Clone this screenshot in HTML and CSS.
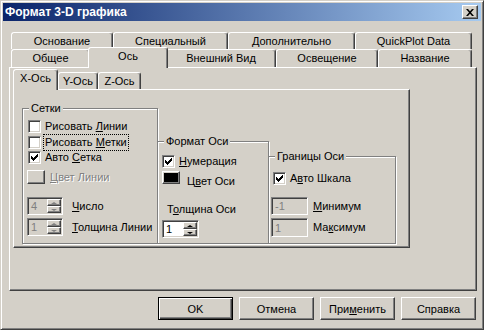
FILE: index.html
```html
<!DOCTYPE html>
<html lang="ru">
<head>
  <meta charset="UTF-8">
  <title>Формат 3-D графика</title>
  <link rel="stylesheet" href="styles.css">
</head>
<body>
  <div class="window">
    <div class="titlebar">
      <span class="title">Формат 3-D графика</span>
      <span class="close">
        <svg width="8" height="7" viewBox="0 0 8 7">
          <path d="M0 0h2l2 2.2L6 0h2L5 3.5 8 7H6L4 4.8 2 7H0l3-3.5z" fill="#000"/>
        </svg>
      </span>
    </div>

    <div class="tabrow back">
      <div class="tab w-osn">Основание</div>
      <div class="tab w-spec">Специальный</div>
      <div class="tab w-dop">Дополнительно</div>
      <div class="tab w-qp">QuickPlot Data</div>
    </div>
    <div class="tabrow front">
      <div class="tab w-gen">Общее</div>
      <div class="tab w-axis active">Ось</div>
      <div class="tab w-view">Внешний Вид</div>
      <div class="tab w-light">Освещение</div>
      <div class="tab w-name">Название</div>
    </div>

    <div class="panel">
      <div class="subtabs">
        <div class="tab sub-x active">X-Ось</div>
        <div class="tab sub-y">Y-Ось</div>
        <div class="tab sub-z">Z-Ось</div>
      </div>
      <div class="subpanel">
        <div class="group grid-group">
          <span class="group-title">Сетки</span>
          <div class="row r-first">
            <span class="check"></span>
            <span class="label">Рисовать <u>Л</u>инии</span>
          </div>
          <div class="row r-gap3">
            <span class="check"></span>
            <span class="label focus">Рисовать <u>М</u>етки</span>
          </div>
          <div class="row r-gap2">
            <span class="check checked">
              <svg width="7" height="7" viewBox="0 0 7 7"><path d="M0 2h1v1h1v1h1V3h1V2h1V1h1V0h1v3H6v1H5v1H4v1H3v1H2V6H1V5H0z" fill="#000"/></svg>
            </span>
            <span class="label">Авто <u>С</u>етка</span>
          </div>
          <div class="row r-color">
            <span class="colorbtn disabled"></span>
            <span class="label muted"><u>Ц</u>вет Линии</span>
          </div>
          <div class="row r-spin1">
            <span class="spin disabled">
              <span class="spin-val">4</span>
              <span class="spin-btns"><span class="arrow up"></span><span class="arrow down"></span></span>
            </span>
            <span class="label spin-label"><u>Ч</u>исло</span>
          </div>
          <div class="row r-spin2">
            <span class="spin disabled">
              <span class="spin-val">1</span>
              <span class="spin-btns"><span class="arrow up"></span><span class="arrow down"></span></span>
            </span>
            <span class="label spin-label"><u>Т</u>олщина Линии</span>
          </div>
        </div>

        <div class="group format-group">
          <span class="group-title">Формат Оси</span>
          <div class="row f-first">
            <span class="check checked">
              <svg width="7" height="7" viewBox="0 0 7 7"><path d="M0 2h1v1h1v1h1V3h1V2h1V1h1V0h1v3H6v1H5v1H4v1H3v1H2V6H1V5H0z" fill="#000"/></svg>
            </span>
            <span class="label"><u>Н</u>умерация</span>
          </div>
          <div class="row f-color">
            <span class="colorbtn black"></span>
            <span class="label low">Ц<u>в</u>ет Оси</span>
          </div>
          <div class="row f-caption">
            <span class="label">Т<u>о</u>лщина Оси</span>
          </div>
          <div class="row f-spin">
            <span class="spin">
              <span class="spin-val">1</span>
              <span class="spin-btns"><span class="arrow up"></span><span class="arrow down"></span></span>
            </span>
          </div>
        </div>

        <div class="group limits-group">
          <span class="group-title">Границы Оси</span>
          <div class="row g-first">
            <span class="check checked">
              <svg width="7" height="7" viewBox="0 0 7 7"><path d="M0 2h1v1h1v1h1V3h1V2h1V1h1V0h1v3H6v1H5v1H4v1H3v1H2V6H1V5H0z" fill="#000"/></svg>
            </span>
            <span class="label">А<u>в</u>то Шкала</span>
          </div>
          <div class="row g-min">
            <span class="field disabled">-1</span>
            <span class="label"><u>М</u>инимум</span>
          </div>
          <div class="row g-max">
            <span class="field disabled">1</span>
            <span class="label">Ма<u>к</u>симум</span>
          </div>
        </div>
      </div>
    </div>

    <div class="buttons">
      <button class="btn default">OK</button>
      <button class="btn">Отмена</button>
      <button class="btn">При<u>м</u>енить</button>
      <button class="btn">Справка</button>
    </div>
  </div>
</body>
</html>
```

FILE: styles.css
```css
* {
  box-sizing: border-box;
}

body {
  margin: 0;
  font-family: "Liberation Sans", Arial, sans-serif;
  font-size: 11px;
  color: #000;
  background: #d4d0c8;
}

.window {
  width: 484px;
  height: 330px;
  background: #d4d0c8;
  border: 1px solid;
  border-color: #d4d0c8 #404040 #404040 #d4d0c8;
  box-shadow: inset 1px 1px #fff, inset -1px -1px #808080;
  padding: 2px;
  display: flex;
  flex-direction: column;
}

/* title bar */
.titlebar {
  height: 18px;
  flex: none;
  display: flex;
  align-items: center;
  justify-content: space-between;
  padding: 0 3px 0 2px;
  background: linear-gradient(to right, #0a246a, #a6caf0);
}

.title {
  color: #fff;
  font-weight: bold;
  font-size: 12px;
}

.close {
  width: 16px;
  height: 14px;
  display: flex;
  align-items: center;
  justify-content: center;
  background: #d4d0c8;
  border: 1px solid;
  border-color: #fff #404040 #404040 #fff;
  box-shadow: inset -1px -1px #808080;
}

/* tabs */
.tabrow {
  display: flex;
  margin-left: 8px;
  flex: none;
}

.tabrow.back {
  margin-top: 11px;
  height: 17px;
}

.tabrow.front {
  height: 18px;
}

.tab {
  height: 100%;
  display: flex;
  align-items: center;
  justify-content: center;
  background: #d4d0c8;
  border: 1px solid;
  border-bottom: none;
  border-color: #fff #404040 transparent #fff;
  box-shadow: inset -1px 0 #808080;
  border-radius: 3px 3px 0 0;
  padding-bottom: 1px;
}

.tab.active {
  position: relative;
  z-index: 2;
  align-self: flex-start;
  height: 21px;
  margin: -2px -2px 0;
  padding-bottom: 4px;
}

.w-osn { width: 102px; }
.w-spec { width: 115px; }
.w-dop { width: 127px; }
.w-qp { width: 117px; }
.w-gen { width: 79px; }
.w-axis { width: 80px; }
.w-view { width: 110px; }
.w-light { width: 102px; }
.w-name { width: 94px; }

.panel {
  flex: none;
  margin-left: 6px;
  width: 468px;
  height: 224px;
  border: 1px solid;
  border-color: #fff #404040 #404040 #fff;
  box-shadow: inset -1px -1px #808080;
  padding: 4px 0 0 3px;
}

.subtabs {
  display: flex;
  height: 17px;
}

.subtabs .tab.active {
  margin: -3px 0 0;
  height: 21px;
}

.sub-x { width: 45px; }
.sub-y { width: 40px; }
.sub-z { width: 43px; }

.subpanel {
  width: 397px;
  height: 159px;
  border: 1px solid;
  border-color: #fff #404040 #404040 #fff;
  box-shadow: inset -1px -1px #808080;
  display: flex;
  align-items: flex-end;
  padding: 0 0 3px 8px;
}

/* group boxes */
.group {
  position: relative;
  display: flex;
  flex-direction: column;
  border: 1px solid #808080;
  box-shadow: inset 1px 1px #fff, 1px 1px #fff;
}

.group-title {
  position: absolute;
  top: -8px;
  left: 6px;
  padding: 0 2px;
  line-height: 14px;
  background: #d4d0c8;
}

.grid-group {
  width: 136px;
  height: 136px;
  padding: 11px 0 0 5px;
}

.format-group {
  width: 112px;
  height: 103px;
  margin-left: -1px;
  padding: 13px 0 0 4px;
}

.limits-group {
  width: 128px;
  height: 88px;
  margin-left: -1px;
  padding: 15px 0 0 4px;
}

.row {
  display: flex;
  align-items: center;
  height: 13px;
  white-space: nowrap;
}

.r-gap3 { margin-top: 3px; }
.r-gap2 { margin-top: 2px; }
.r-color { margin-top: 6px; height: 14px; margin-left: -1px; }
.r-spin1 { margin-top: 13px; height: 18px; margin-left: -1px; }
.r-spin2 { margin-top: 3px; height: 18px; margin-left: -1px; }

.f-color { margin-top: 3px; }
.f-caption { margin-top: 19px; margin-left: 1px; }
.f-spin { margin-top: 4px; height: 18px; }

.g-min { margin-top: 12px; height: 18px; margin-left: -2px; }
.g-max { margin-top: 3px; height: 19px; margin-left: -2px; }

.label {
  margin-left: 4px;
  line-height: 13px;
}

.label.focus {
  outline: 1px dotted #000;
  outline-offset: 1px;
}

.label.muted {
  margin-left: 5px;
  color: #808080;
  text-shadow: 1px 1px #fff;
}

.label.low {
  margin-left: 7px;
  margin-top: 7px;
}

.spin-label {
  margin-left: 9px;
}

.g-min .label,
.g-max .label {
  margin-left: 5px;
}

/* controls */
.check {
  width: 13px;
  height: 13px;
  flex: none;
  display: flex;
  align-items: center;
  justify-content: center;
  background: #fff;
  border: 1px solid;
  border-color: #808080 #fff #fff #808080;
  box-shadow: inset 1px 1px #404040, inset -1px -1px #d4d0c8;
}

.colorbtn {
  width: 18px;
  height: 14px;
  flex: none;
  border: 1px solid;
  border-color: #fff #404040 #404040 #fff;
  box-shadow: inset -1px -1px #808080;
  background: #d4d0c8;
}

.colorbtn.black {
  height: 13px;
  background: #000;
  box-shadow: inset -1px -1px #808080, inset 1px 1px #d4d0c8;
}

.spin,
.field {
  height: 18px;
  flex: none;
  display: flex;
  align-items: center;
  background: #fff;
  border: 1px solid;
  border-color: #808080 #fff #fff #808080;
  box-shadow: inset 1px 1px #404040, inset -1px -1px #d4d0c8;
  padding: 1px;
}

.spin {
  width: 36px;
}

.f-spin .spin {
  width: 37px;
}

.field {
  width: 37px;
  height: 100%;
  padding-left: 3px;
}

.spin.disabled,
.field.disabled {
  background: #d4d0c8;
  color: #808080;
}

.spin-val {
  flex: 1;
  padding-left: 2px;
}

.spin-btns {
  width: 14px;
  height: 14px;
  display: flex;
  flex-direction: column;
}

.arrow {
  flex: 1;
  display: flex;
  align-items: center;
  justify-content: center;
  background: #d4d0c8;
  border: 1px solid;
  border-color: #fff #404040 #404040 #fff;
  box-shadow: inset -1px -1px #808080;
}

.arrow::after {
  content: "";
  border-left: 3px solid transparent;
  border-right: 3px solid transparent;
}

.arrow.up::after {
  border-bottom: 2px solid #000;
}

.arrow.down::after {
  border-top: 2px solid #000;
}

.disabled .arrow.up::after {
  border-bottom-color: #808080;
}

.disabled .arrow.down::after {
  border-top-color: #808080;
}

/* dialog buttons */
.buttons {
  display: flex;
  justify-content: flex-end;
  gap: 6px;
  margin-top: 6px;
  padding-right: 5px;
}

.btn {
  width: 75px;
  height: 23px;
  padding: 0;
  font-family: inherit;
  font-size: 11px;
  color: #000;
  background: #d4d0c8;
  border: 1px solid;
  border-color: #fff #404040 #404040 #fff;
  box-shadow: inset -1px -1px #808080;
}

.btn.default {
  border-color: #000;
  box-shadow: inset 1px 1px #fff, inset -1px -1px #404040, inset -2px -2px #808080;
}
```
